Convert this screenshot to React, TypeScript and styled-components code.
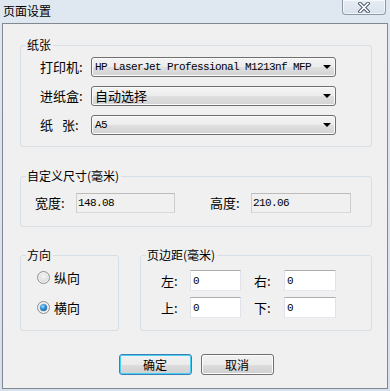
import React from 'react';
import styled, { createGlobalStyle } from 'styled-components';

const GlobalStyle = createGlobalStyle`
  html, body {
    margin: 0;
    padding: 0;
    background: #dbe4ef;
  }
  body {
    font-family: "Noto Sans CJK SC", "Noto Sans", sans-serif;
    font-size: 13px;
    color: #000;
  }
  * {
    box-sizing: border-box;
  }
`;

const Window = styled.div`
  width: 390px;
  height: 391px;
  display: flex;
  flex-direction: column;
  padding: 0 2px 2px 2px;
  background: linear-gradient(#dfe7f1, #d7e1ed);
`;

const TitleBar = styled.div`
  height: 23px;
  display: flex;
  align-items: flex-start;
  justify-content: space-between;
`;

const Title = styled.div`
  margin: 3px 0 0 1px;
  font-size: 12px;
  line-height: 15px;
  color: #000;
`;

const CloseButton = styled.div`
  width: 44px;
  height: 15px;
  margin-right: 2px;
  border: 1px solid #8d98a7;
  border-top: none;
  border-radius: 0 0 4px 4px;
  background: linear-gradient(#e8edf4, #d9e1ec);
  box-shadow: inset 0 0 0 1px rgba(255, 255, 255, 0.6);
  display: flex;
  align-items: center;
  justify-content: center;
`;

const Panel = styled.div`
  flex: 1;
  display: flex;
  flex-direction: column;
  border: 1px solid #828790;
  background: #f0f0f0;
  padding: 14px 15px 13px 17px;
`;

const Group = styled.fieldset<{ $width?: number; $gap?: number }>`
  margin: ${({ $gap }) => $gap ?? 0}px 0 0 0;
  padding: 0;
  min-width: 0;
  width: ${({ $width }) => ($width ? `${$width}px` : 'auto')};
  border: 1px solid #d5dfe5;
  border-radius: 3px;
`;

const Legend = styled.legend`
  margin-left: 5px;
  padding: 0 2px 0 1px;
  font-size: 12px;
  line-height: 14px;
`;

const GroupBody = styled.div<{ $pad: string; $gap?: number }>`
  padding: ${({ $pad }) => $pad};
  display: flex;
  flex-direction: column;
  gap: ${({ $gap }) => $gap ?? 0}px;
`;

const Row = styled.div`
  display: flex;
  align-items: center;
`;

const Label = styled.span<{ $width: number }>`
  width: ${({ $width }) => $width}px;
  flex: none;
  font-size: 13px;
  line-height: 20px;
  white-space: nowrap;
`;

const Spacer = styled.span<{ $width: number }>`
  display: inline-block;
  width: ${({ $width }) => $width}px;
`;

const Combo = styled.div`
  width: 245px;
  height: 20px;
  display: flex;
  align-items: center;
  justify-content: space-between;
  padding: 0 4px 0 3px;
  border: 1px solid #707070;
  border-radius: 3px;
  background: linear-gradient(#f4f4f4 0%, #ececec 50%, #dfdfdf 52%, #d3d3d3 100%);
  box-shadow: inset 0 0 0 1px #fbfbfb;
`;

const ComboText = styled.span<{ $cjk?: boolean }>`
  font-family: ${({ $cjk }) =>
    $cjk ? '"Noto Sans CJK SC", sans-serif' : '"Liberation Mono", monospace'};
  font-size: ${({ $cjk }) => ($cjk ? 13 : 11)}px;
  letter-spacing: ${({ $cjk }) => ($cjk ? 0 : -0.6)}px;
  line-height: 16px;
  white-space: nowrap;
`;

const Arrow = styled.span`
  width: 0;
  height: 0;
  border-left: 4px solid transparent;
  border-right: 4px solid transparent;
  border-top: 4px solid #000;
`;

const TextBox = styled.div<{ $width: number; $height?: number; $disabled?: boolean }>`
  width: ${({ $width }) => $width}px;
  height: ${({ $height }) => $height ?? 20}px;
  flex: none;
  display: flex;
  align-items: center;
  padding-left: ${({ $disabled }) => ($disabled ? 1 : 2)}px;
  border: 1px solid ${({ $disabled }) => ($disabled ? '#cdcdcd' : '#e2e3ea')};
  border-top-color: ${({ $disabled }) => ($disabled ? '#bcbcbc' : '#abadb3')};
  border-bottom-color: ${({ $disabled }) => ($disabled ? '#d9d9d9' : '#e3e9ef')};
  background: ${({ $disabled }) => ($disabled ? '#f0f0f0' : '#fff')};
  font-family: "Liberation Mono", monospace;
  font-size: 11px;
  letter-spacing: -0.6px;
  color: #000;
`;

const BottomRow = styled.div`
  margin-top: 21px;
  display: flex;
  align-items: stretch;
  gap: 21px;
`;

const RadioRow = styled.label`
  height: 15px;
  display: flex;
  align-items: center;
  gap: 4px;
  font-size: 13px;
  line-height: 15px;
`;

const RadioDot = styled.span<{ $checked?: boolean }>`
  position: relative;
  width: 13px;
  height: 13px;
  flex: none;
  border-radius: 50%;
  border: 1px solid #8e8f8f;
  background: radial-gradient(circle at 50% 40%, #f6f6f6 0%, #dcdcdc 60%, #cbcbcb 100%);
  box-shadow: inset 0 0 0 1px #f4f4f4;

  &::after {
    content: '';
    display: ${({ $checked }) => ($checked ? 'block' : 'none')};
    position: absolute;
    left: 2px;
    top: 2px;
    width: 7px;
    height: 7px;
    border-radius: 50%;
    background: radial-gradient(circle at 40% 35%, #9fe0ff 0%, #2a8ad4 45%, #0b4a86 100%);
  }
`;

const MarginGrid = styled.div`
  display: grid;
  grid-template-columns: 29px 51px 13px 30px 52px;
  grid-auto-rows: 21px;
  row-gap: 6px;
  align-items: center;
`;

const ButtonRow = styled.div`
  margin-top: 23px;
  display: flex;
  justify-content: center;
  gap: 9px;
`;

const Button = styled.button<{ $default?: boolean }>`
  width: 73px;
  height: 21px;
  margin: 0;
  padding: 0;
  border: 1px solid ${({ $default }) => ($default ? '#3c7fb1' : '#707070')};
  border-radius: 3px;
  background: linear-gradient(#f2f2f2 0%, #ebebeb 50%, #dddddd 52%, #cfcfcf 100%);
  box-shadow: inset 0 0 0 1px ${({ $default }) => ($default ? '#48d1f8' : '#fcfcfc')};
  font-family: "Noto Sans CJK SC", sans-serif;
  font-size: 12px;
  line-height: 17px;
  color: #000;
`;

const CloseGlyph = () => (
  <svg width="12" height="11" viewBox="0 0 12 11">
    <path d="M2 1.5 L10 9.5 M10 1.5 L2 9.5" stroke="#4c5869" strokeWidth="3.6" strokeLinecap="square" />
    <path d="M2 1.5 L10 9.5 M10 1.5 L2 9.5" stroke="#fff" strokeWidth="1.6" strokeLinecap="square" />
  </svg>
);

const App = () => {
  return (
    <>
      <GlobalStyle />
      <Window>
        <TitleBar>
          <Title>页面设置</Title>
          <CloseButton>
            <CloseGlyph />
          </CloseButton>
        </TitleBar>
        <Panel>
          <Group>
            <Legend>纸张</Legend>
            <GroupBody $pad="5px 0 11px 19px" $gap={9}>
              <Row>
                <Label $width={51}>打印机:</Label>
                <Combo>
                  <ComboText>HP LaserJet Professional M1213nf MFP</ComboText>
                  <Arrow />
                </Combo>
              </Row>
              <Row>
                <Label $width={51}>进纸盒:</Label>
                <Combo>
                  <ComboText $cjk>自动选择</ComboText>
                  <Arrow />
                </Combo>
              </Row>
              <Row>
                <Label $width={51}>
                  纸<Spacer $width={9} />张:
                </Label>
                <Combo>
                  <ComboText>A5</ComboText>
                  <Arrow />
                </Combo>
              </Row>
            </GroupBody>
          </Group>

          <Group $gap={22}>
            <Legend>自定义尺寸(毫米)</Legend>
            <GroupBody $pad="10px 0 13px 14px">
              <Row>
                <Label $width={41}>宽度:</Label>
                <TextBox $width={99} $disabled>148.08</TextBox>
                <Spacer $width={35} />
                <Label $width={41}>高度:</Label>
                <TextBox $width={100} $disabled>210.06</TextBox>
              </Row>
            </GroupBody>
          </Group>

          <BottomRow>
            <Group $width={99}>
              <Legend>方向</Legend>
              <GroupBody $pad="8px 0 0 16px" $gap={15}>
                <RadioRow>
                  <RadioDot />
                  纵向
                </RadioRow>
                <RadioRow>
                  <RadioDot $checked />
                  横向
                </RadioRow>
              </GroupBody>
            </Group>
            <Group $width={232}>
              <Legend>页边距(毫米)</Legend>
              <GroupBody $pad="8px 0 12px 20px">
                <MarginGrid>
                  <Label $width={29}>左:</Label>
                  <TextBox $width={51} $height={21}>0</TextBox>
                  <span />
                  <Label $width={30}>右:</Label>
                  <TextBox $width={52} $height={21}>0</TextBox>
                  <Label $width={29}>上:</Label>
                  <TextBox $width={51} $height={21}>0</TextBox>
                  <span />
                  <Label $width={30}>下:</Label>
                  <TextBox $width={52} $height={21}>0</TextBox>
                </MarginGrid>
              </GroupBody>
            </Group>
          </BottomRow>

          <ButtonRow>
            <Button $default>确定</Button>
            <Button>取消</Button>
          </ButtonRow>
        </Panel>
      </Window>
    </>
  );
};

export default App;
